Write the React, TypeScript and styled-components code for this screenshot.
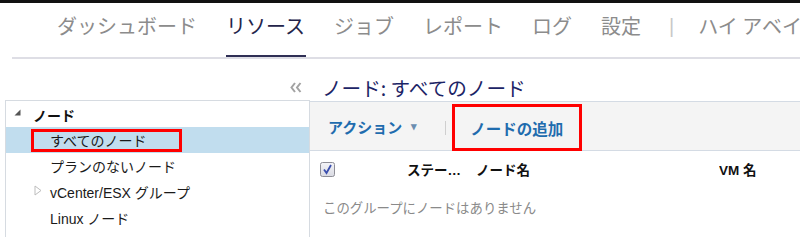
import React from 'react';
import styled, { createGlobalStyle } from 'styled-components';

const GlobalStyle = createGlobalStyle`
  html, body {
    margin: 0;
    padding: 0;
    background: #fff;
    overflow: hidden;
  }
  body {
    font-family: 'Liberation Sans', 'Noto Sans CJK JP', sans-serif;
    color: #222;
  }
  * {
    box-sizing: border-box;
  }
`;

const tabs = ['ダッシュボード', 'リソース', 'ジョブ', 'レポート', 'ログ', '設定'];

const treeItems = [
  { label: 'すべてのノード', selected: true, collapsed: false },
  { label: 'プランのないノード', selected: false, collapsed: false },
  { label: 'vCenter/ESX グループ', selected: false, collapsed: true },
  { label: 'Linux ノード', selected: false, collapsed: false },
  { label: 'Hyper-V グループ', selected: false, collapsed: true },
];

const App = () => {
  return (
    <>
      <GlobalStyle />
      <TopBar />
      <Nav>
        {tabs.map((t) => (
          <Tab key={t} $active={t === 'リソース'}>
            {t}
          </Tab>
        ))}
        <NavDivider>|</NavDivider>
        <Tab $active={false}>ハイ アベイラビリティ</Tab>
      </Nav>
      <Main>
        <Sidebar>
          <CollapseRow>
            <svg width="12" height="11" viewBox="0 0 12 11">
              <polyline points="5,1 1.5,5.5 5,10" fill="none" stroke="#a3a3a3" strokeWidth="2" />
              <polyline points="10.5,1 7,5.5 10.5,10" fill="none" stroke="#a3a3a3" strokeWidth="2" />
            </svg>
          </CollapseRow>
          <TreePanel>
            <RootRow>
              <svg width="7" height="7" viewBox="0 0 7 7">
                <polygon points="6.5,0.5 6.5,6.5 0.5,6.5" fill="#555" />
              </svg>
              <RootLabel>ノード</RootLabel>
            </RootRow>
            {treeItems.map((item) => (
              <TreeRow key={item.label} $selected={item.selected}>
                <Twisty>
                  {item.collapsed && (
                    <svg width="8" height="11" viewBox="0 0 8 11">
                      <polygon points="1,1 7,5.5 1,10" fill="#fff" stroke="#bdbdbd" strokeWidth="1" />
                    </svg>
                  )}
                </Twisty>
                <TreeLabel $selected={item.selected}>{item.label}</TreeLabel>
              </TreeRow>
            ))}
          </TreePanel>
        </Sidebar>
        <Content>
          <Title>ノード: すべてのノード</Title>
          <Toolbar>
            <ActionMenu>
              アクション
              <Caret>▾</Caret>
            </ActionMenu>
            <ToolSeparator />
            <AddButton>ノードの追加</AddButton>
          </Toolbar>
          <TableHeader>
            <CheckCell>
              <svg width="15" height="15" viewBox="0 0 15 15">
                <defs>
                  <linearGradient id="cb" x1="0" y1="0" x2="0" y2="1">
                    <stop offset="0" stopColor="#f4f4f8" />
                    <stop offset="1" stopColor="#d9dae2" />
                  </linearGradient>
                </defs>
                <rect x="0.5" y="0.5" width="14" height="14" rx="2" fill="url(#cb)" stroke="#8e8e96" />
                <polyline points="4,7.5 6.5,11 11,3" fill="none" stroke="#3b4fae" strokeWidth="1.8" />
              </svg>
            </CheckCell>
            <HeadCell $width={69}>ステータス</HeadCell>
            <HeadCell $width={243}>ノード名</HeadCell>
            <HeadCell $width={80}>VM 名</HeadCell>
          </TableHeader>
          <EmptyMessage>このグループにノードはありません</EmptyMessage>
        </Content>
      </Main>
    </>
  );
};

export default App;

const TopBar = styled.div`
  height: 3px;
  background: #111;
`;

const Nav = styled.nav`
  display: flex;
  gap: 28px;
  height: 56px;
  margin-left: 12px;
  padding-left: 45px;
  border-bottom: 2px solid #dedee5;
  white-space: nowrap;
  overflow: hidden;
`;

const Tab = styled.div<{ $active: boolean }>`
  flex-shrink: 0;
  height: 56px;
  padding-top: 12px;
  font-family: 'Noto Sans CJK JP', sans-serif;
  font-size: 20px;
  line-height: 22px;
  color: ${(p) => (p.$active ? '#24244a' : '#8c8c8c')};
  font-weight: 400;
  border-bottom: 4px solid ${(p) => (p.$active ? '#2f2f55' : 'transparent')};
  margin-bottom: -2px;
  padding-right: 1px;
`;

const NavDivider = styled.div`
  flex-shrink: 0;
  padding-top: 12px;
  margin-left: -1px;
  margin-right: -4px;
  font-size: 20px;
  line-height: 22px;
  color: #c8c8c8;
`;

const Main = styled.div`
  display: flex;
  padding-left: 5px;
`;

const Sidebar = styled.div`
  width: 305px;
  flex-shrink: 0;
  display: flex;
  flex-direction: column;
`;

const CollapseRow = styled.div`
  height: 41px;
  display: flex;
  justify-content: flex-end;
  align-items: flex-end;
  padding-right: 8px;
  padding-bottom: 7px;
`;

const TreePanel = styled.div`
  border: 1px solid #d6dbe1;
  border-bottom: none;
  height: 200px;
  padding-top: 1px;
`;

const RootRow = styled.div`
  display: flex;
  align-items: center;
  height: 25px;
  padding-left: 8px;
  gap: 12px;
  svg {
    margin-top: -4px;
  }
`;

const RootLabel = styled.span`
  font-size: 14px;
  font-weight: bold;
  color: #111;
`;

const TreeRow = styled.div<{ $selected: boolean }>`
  display: flex;
  align-items: center;
  height: 26px;
  padding-left: 25px;
  background: ${(p) => (p.$selected ? '#c1ddee' : 'transparent')};
`;

const Twisty = styled.span`
  width: 0;
  flex-shrink: 0;
  display: flex;
  align-items: center;
  overflow: visible;
  margin-top: -4px;
  svg {
    flex-shrink: 0;
    margin-left: 3px;
  }
`;

const TreeLabel = styled.span<{ $selected: boolean }>`
  font-size: 14px;
  color: #1a1a1a;
  height: ${(p) => (p.$selected ? '23px' : 'auto')};
  width: ${(p) => (p.$selected ? '151px' : 'auto')};
  display: flex;
  align-items: center;
  padding-left: ${(p) => (p.$selected ? '16px' : '19px')};
  border: ${(p) => (p.$selected ? '3px solid #f00' : 'none')};
  white-space: nowrap;
`;

const Content = styled.div`
  flex: 1;
  display: flex;
  flex-direction: column;
  margin-left: -1px;
`;

const Title = styled.div`
  height: 42px;
  padding-left: 13px;
  padding-top: 17px;
  font-family: 'Noto Sans CJK JP', sans-serif;
  font-size: 19.6px;
  line-height: 24px;
  color: #1c2466;
`;

const Toolbar = styled.div`
  height: 50px;
  display: flex;
  align-items: stretch;
  background: #f4f4f4;
  border-top: 1px solid #d4dbe4;
  border-bottom: 1px solid #d4dbe4;
  border-left: 1px solid #d6dbe1;
  padding-left: 18px;
`;

const ActionMenu = styled.div`
  display: flex;
  align-items: center;
  font-size: 15px;
  font-weight: bold;
  color: #1f6cae;
  gap: 9px;
`;

const Caret = styled.span`
  font-size: 11px;
  color: #6a8db0;
`;

const ToolSeparator = styled.div`
  width: 1px;
  height: 14px;
  background: #cfcfcf;
  align-self: center;
  margin-left: 28px;
  margin-top: 4px;
`;

const AddButton = styled.div`
  margin-left: 6px;
  margin-top: 2px;
  margin-bottom: -1px;
  width: 130px;
  border: 3px solid #f00;
  display: flex;
  align-items: center;
  padding-left: 15px;
  font-size: 15.5px;
  font-weight: bold;
  color: #1f6cae;
`;

const TableHeader = styled.div`
  display: flex;
  align-items: center;
  height: 35px;
  padding-left: 10px;
  border-left: 1px solid #d6dbe1;
`;

const CheckCell = styled.div`
  width: 87px;
  display: flex;
  align-items: center;
  padding-top: 1px;
`;

const HeadCell = styled.div<{ $width: number }>`
  width: ${(p) => p.$width}px;
  font-size: 13.5px;
  font-weight: bold;
  color: #111;
  white-space: nowrap;
  overflow: hidden;
  text-overflow: ellipsis;
  padding-right: 12px;
`;

const EmptyMessage = styled.div`
  border-left: 1px solid #d6dbe1;
  height: 80px;
  padding-left: 13px;
  padding-top: 11px;
  font-size: 13.4px;
  color: #8a8a8a;
`;
